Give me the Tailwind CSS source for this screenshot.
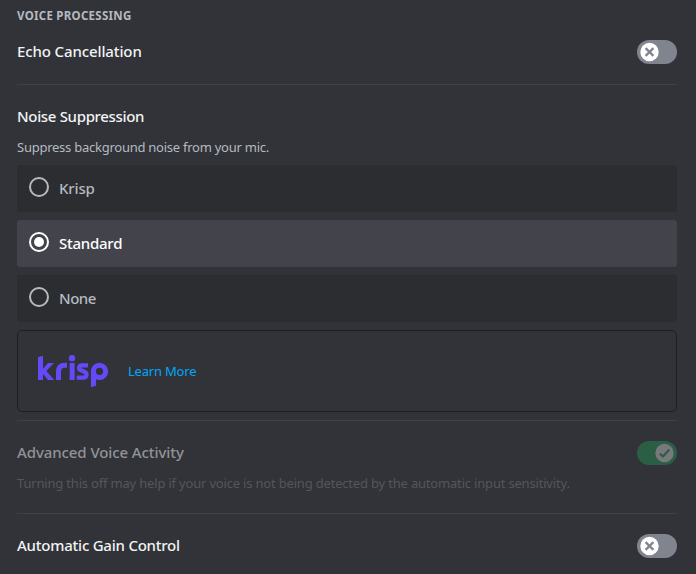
<!DOCTYPE html>
<html lang="en">
<head>
<meta charset="utf-8">
<title>Voice Processing</title>
<script src="https://cdn.jsdelivr.net/npm/@tailwindcss/browser@4"></script>
</head>
<body class="w-[696px] h-[574px] overflow-hidden bg-[#313338] font-['Noto_Sans',sans-serif] text-[#f2f3f5]">
<main class="pl-[17px] w-[677px] flex flex-col">
  <h2 class="mt-2 h-4 leading-4 text-[11.5px] font-bold text-[#b5bac1] whitespace-nowrap tracking-[0.27px]">VOICE PROCESSING</h2>
  <section class="mt-4 h-[45px] border-b border-[#3f4147] flex justify-between items-start">
    <h3 class="leading-[22px] text-[15px] font-medium tracking-[-0.12px]">Echo Cancellation</h3>
    <svg class="w-10 h-6" viewBox="0 0 40 24"><rect width="40" height="24" rx="12" fill="#80848e"/><circle cx="12.5" cy="12" r="9.2" fill="#fff"/><path d="M8.6 8.1l7.8 7.8M16.4 8.1l-7.8 7.8" stroke="#80848e" stroke-width="2.2"/></svg>
  </section>
  <section class="mt-5 flex flex-col">
    <h3 class="h-6 leading-[22px] text-[15px] font-medium tracking-[-0.33px]">Noise Suppression</h3>
    <p class="mt-2 leading-5 text-[13px] text-[#b5bac1] tracking-[-0.25px]">Suppress background noise from your mic.</p>
    <div class="mt-2 flex flex-col gap-2 text-[15px] font-medium text-[#b5bac1]">
      <div class="h-[47px] rounded-[3px] bg-[#2b2d31] flex items-center pl-3 gap-[10px]"><svg class="w-5 h-5 -mt-[3px]" viewBox="0 0 20 20"><circle cx="10" cy="10" r="9" fill="none" stroke="#b5bac1" stroke-width="2"/></svg><span class="tracking-[-0.15px]">Krisp</span></div>
      <div class="h-[47px] rounded-[3px] bg-[#43444b] text-white flex items-center pl-3 gap-[10px]"><svg class="w-5 h-5 -mt-[3px]" viewBox="0 0 20 20"><circle cx="10" cy="10" r="9" fill="none" stroke="#fff" stroke-width="2"/><circle cx="10" cy="10" r="5" fill="#fff"/></svg><span class="tracking-[-0.25px]">Standard</span></div>
      <div class="h-[47px] rounded-[3px] bg-[#2b2d31] flex items-center pl-3 gap-[10px]"><svg class="w-5 h-5 -mt-[3px]" viewBox="0 0 20 20"><circle cx="10" cy="10" r="9" fill="none" stroke="#b5bac1" stroke-width="2"/></svg><span class="tracking-[-0.5px]">None</span></div>
    </div>
    <div class="mt-2 h-[82px] rounded-[5px] border border-[#1e1f22] flex items-center pl-[19px]">
      <svg class="w-[72px] h-[34px]" viewBox="81 87 216 102" fill="none" stroke="#6349f7" stroke-width="15">
        <path d="M84 97L99 92V131L114 114H132L109 138L133 165H114L99 147V165H84Z" fill="#6349f7" stroke="none"/>
        <path d="M145.5 165V140Q145.5 121 165 121H171"/>
        <circle cx="186" cy="99.5" r="9.5" fill="#6349f7" stroke="none"/>
        <path d="M186.5 114V165"/>
        <path d="M234 121H216C205 121 205 134 214 136L223 140C233 144 231 158 220 158H200" stroke-width="13"/>
        <circle cx="268.5" cy="139" r="18.5"/>
        <path d="M243 139H258V182L243 187Z" fill="#6349f7" stroke="none"/>
      </svg>
      <a class="ml-[19px] pt-[2px] text-[13px] text-[#00a8fc] tracking-[-0.2px]">Learn More</a>
    </div>
  </section>
  <div class="mt-2 border-t border-[#3f4147]"></div>
  <section class="mt-5 h-[73px] border-b border-[#3f4147]">
    <div class="flex justify-between">
      <h3 class="leading-[22px] text-[15px] font-medium text-[#929396] tracking-[-0.09px]">Advanced Voice Activity</h3>
      <svg class="w-10 h-6" viewBox="0 0 40 24"><rect width="40" height="24" rx="12" fill="#2b5f45"/><circle cx="27.5" cy="12" r="9.2" fill="#77797c"/><path d="M22.9 12.6L26 15.5L32.3 8.4" fill="none" stroke="#2b5f45" stroke-width="2.2"/></svg>
    </div>
    <p class="mt-2 leading-5 text-[13px] text-[#54565b] whitespace-nowrap tracking-[-0.185px]">Turning this off may help if your voice is not being detected by the automatic input sensitivity.</p>
  </section>
  <section class="mt-5 flex justify-between">
    <h3 class="leading-[22px] text-[15px] font-medium tracking-[-0.23px]">Automatic Gain Control</h3>
    <svg class="w-10 h-6" viewBox="0 0 40 24"><rect width="40" height="24" rx="12" fill="#80848e"/><circle cx="12.5" cy="12" r="9.2" fill="#fff"/><path d="M8.6 8.1l7.8 7.8M16.4 8.1l-7.8 7.8" stroke="#80848e" stroke-width="2.2"/></svg>
  </section>
</main>
</body>
</html>
